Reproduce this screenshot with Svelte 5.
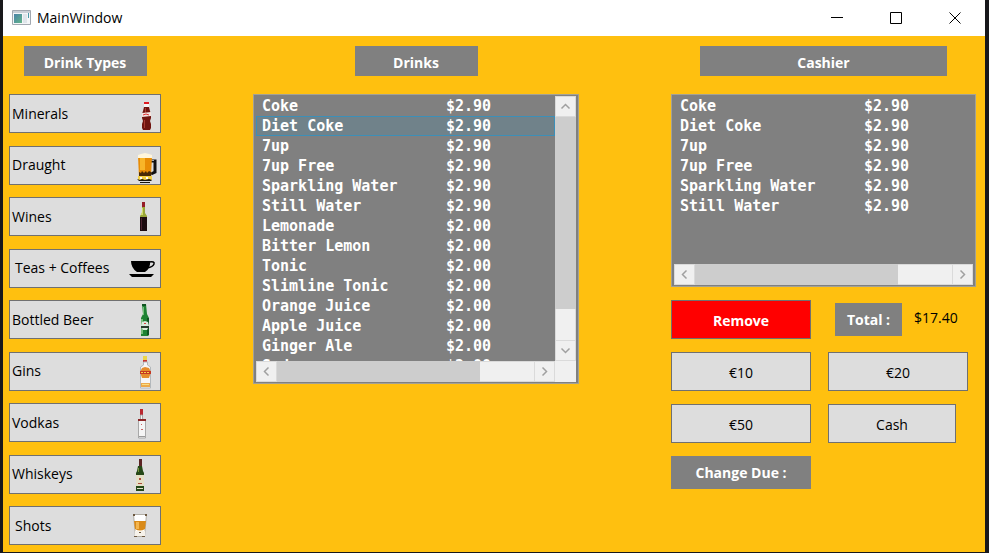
<script>
  const types = [
    { label: 'Minerals', icon: 'coke' },
    { label: 'Draught', icon: 'pint' },
    { label: 'Wines', icon: 'wine' },
    { label: 'Teas + Coffees', icon: 'cup', indent: true },
    { label: 'Bottled Beer', icon: 'beer' },
    { label: 'Gins', icon: 'gin' },
    { label: 'Vodkas', icon: 'vodka' },
    { label: 'Whiskeys', icon: 'whiskey' },
    { label: 'Shots', icon: 'shot', indent: true }
  ];

  const drinks = [
    { name: 'Coke', price: 2.9 },
    { name: 'Diet Coke', price: 2.9 },
    { name: '7up', price: 2.9 },
    { name: '7up Free', price: 2.9 },
    { name: 'Sparkling Water', price: 2.9 },
    { name: 'Still Water', price: 2.9 },
    { name: 'Lemonade', price: 2 },
    { name: 'Bitter Lemon', price: 2 },
    { name: 'Tonic', price: 2 },
    { name: 'Slimline Tonic', price: 2 },
    { name: 'Orange Juice', price: 2 },
    { name: 'Apple Juice', price: 2 },
    { name: 'Ginger Ale', price: 2 },
    { name: 'Soda', price: 2 }
  ];

  let selected = $state(1);
  let picked = $state(-1);
  let order = $state(drinks.slice(0, 6));
  let total = $derived(order.reduce((sum, d) => sum + d.price, 0));

  function addDrink(i) {
    selected = i;
    order.push(drinks[i]);
  }

  function removeDrink() {
    if (picked >= 0) order.splice(picked, 1);
    picked = -1;
  }
</script>

{#snippet arrow(d, label)}
  <button class="arrow" aria-label={label}>
    <svg viewBox="0 0 21 21" width="21" height="21" aria-hidden="true"><path {d} /></svg>
  </button>
{/snippet}

{#snippet hbar()}
  <div class="hbar">
    {@render arrow('M12.500 6.500 L8.500 10.500 L12.500 14.500', 'Scroll left')}
    <div class="track"><div class="thumb"></div></div>
    {@render arrow('M8.500 6.500 L12.500 10.500 L8.500 14.500', 'Scroll right')}
  </div>
{/snippet}

{#snippet row(item, active, pick)}
  <li role="option" aria-selected={active}>
    <button class="row" class:active onclick={pick}>
      <span class="name">{item.name}</span><span>${item.price.toFixed(2)}</span>
    </button>
  </li>
{/snippet}

{#snippet picture(kind)}
  <svg class="picture" viewBox="0 0 34 37" width="34" height="37" aria-hidden="true">
    {#if kind === 'coke'}
      <path fill="#f8f5f4" d="M18 9h5v4l1 4h-7l1-4z" />
      <path fill="#e01b22" d="M18 7h5v2h-5z" />
      <path fill="#70140f" d="M18 12h5l1 4 1 3v4l-1 3 1 3v4l-1 2h-7l-1-2v-4l1-3-1-3v-4l1-3z" />
      <path fill="#a83a30" d="M19 13h1v5h-1zM18 25h1v8h-1z" />
      <path fill="#f4e4e0" d="M16 18l9-1v4l-9 1z" />
      <path fill="none" stroke="#d33" d="M17 20l3-1 3 1" />
    {:else if kind === 'pint'}
      <path fill="none" stroke="#111" stroke-width="3" d="M25 14h4v11l-4 2" />
      <path fill="none" stroke="#aaa" d="M25 13.500h3" />
      <path fill="#e88c05" d="M12 9h14l-1 21H13z" />
      <path fill="#f8b529" d="M14 11h5v12h-5z" />
      <path fill="#fff6dc" d="M12 8l3-1 4-1 4 1 3 1v3H12z" />
      <path fill="#4a2a05" d="M13 25l2 1 1-2 2 2 2-2 1 2 2-2 2 1v4H13z" />
      <path fill="#f3d044" d="M12 29h14v4H12z" />
      <path fill="#18150c" d="M11 32l3 1 2-1 3 1 4-1 3 1-1 1H13zM14 35h10v1H14z" />
      <path fill="#fff" d="M14 30h2v2h-2zM20 30h2v2h-2z" />
    {:else if kind === 'wine'}
      <path fill="#951d28" d="M16 4h3v6h-3z" />
      <path fill="#9aa63a" d="M16 9h3v6l2 3v3h-7v-3l2-3z" />
      <path fill="#d2dc68" d="M16 10h1v7h-2v-1l1-2z" />
      <path fill="#1c0c10" d="M14 19h7v14h-7z" />
      <path fill="#4b2430" d="M15 20h1v12h-1z" />
    {:else if kind === 'cup'}
      <path d="M5 11h19q1 7-5 11h-8Q5 18 5 11zM3 24h25l-3 3H6z" />
      <path fill="none" stroke="#000" stroke-width="1.500" d="M23 12q6-1 5 2t-7 4" />
    {:else if kind === 'beer'}
      <path fill="#1f8234" d="M16 3h4l1 10 2 4v17l-1 1h-7v-18l2-4z" />
      <path fill="#0f5420" d="M16 3h4v2h-4zM21 17h2v17h-2z" />
      <path fill="#76be79" d="M17 6h1v8h-1zM15 18h2v15h-2z" />
      <path fill="#d9eadb" d="M16 21l3-1 3 1 1 4-2 4h-4l-2-4z" />
      <path fill="#263b2a" d="M15 25h8v2h-8z" />
      <path fill="#d6433f" d="M18 22h2v1h-2z" />
    {:else if kind === 'gin'}
      <path fill="#ecd54b" d="M17 3h4v5h-4z" />
      <path fill="#c8322e" d="M17 7h4v2h-4z" />
      <path fill="#f6f6f6" stroke="#b3b8bc" d="M17.500 9v3l-3 2v21h10V14l-3-2V9z" />
      <path fill="#e58c2c" d="M16 15l3-1 4 1 2 4-2 6h-7l-2-6z" />
      <path fill="#c53923" d="M14 18h11v3H14z" />
      <path fill="none" stroke="#f6cd49" d="M15 19.500h2m1 0h2m1 0h2" />
      <path fill="#eda94a" d="M15 30h9v4h-9z" />
      <path fill="#f8df83" d="M16 31h7v1h-7z" />
    {:else if kind === 'vodka'}
      <path fill="#b9272f" d="M14 5h3v6h-3z" />
      <path fill="#f5f5f5" stroke="#a8a8a8" d="M14.500 11v4l-2 1v18h7V16l-3-1v-4z" />
      <path fill="#8d2626" d="M12 15h8v2h-8z" />
      <path fill="#c66" d="M15 20h1v1h-1zM15 25h2v1h-2z" />
      <path fill="#999" d="M13 32h6v1h-6z" />
    {:else if kind === 'whiskey'}
      <path fill="#5c2424" d="M13 3h3v8h-3z" />
      <path fill="#264818" d="M12 10h4l1 5 1 2v18h-8V17l1-2z" />
      <path fill="#73943b" d="M12 12h1v4h-1z" />
      <path fill="#e5dfc6" d="M10 19h8v11h-8zM11 32h6v1h-6z" />
      <path fill="#ac4c3c" d="M13 22h2v2h-2zM12 27h4v1h-4z" />
    {:else}
      <path fill="#fff" stroke="#b3afa6" d="M7.500 7.500h13l-2 22h-9z" />
      <path fill="#d98a18" d="M8 14h12l-1 8q-5 3-10 0z" />
      <path fill="#f3b54e" d="M10 15h3v7h-3z" />
      <path fill="#f6f2ea" d="M9 24h10v5H9z" />
      <path fill="#6c5840" d="M8 29h3v1H8zM16 29h3v1h-3zM13 25h2v1h-2zM7 7h2v2H7zM19 7h2v2h-2z" />
    {/if}
  </svg>
{/snippet}

<div class="window">
  <header>
    <svg width="20" height="16" viewBox="0 0 20 16" aria-hidden="true">
      <defs>
        <linearGradient id="pane" x2="1" y2="1">
          <stop offset="0" stop-color="#4a83a8" /><stop offset="1" stop-color="#63b58a" />
        </linearGradient>
      </defs>
      <path fill="#f4f6f8" stroke="#a2a8b0" d="M.5 .5h18v14H.5z" />
      <path fill="#c9cfd6" d="M1 1h17v2H1z" />
      <path fill="url(#pane)" d="M2 4h8v9H2z" />
      <path fill="#dfe5ea" d="M11 4h4v9h-4z" />
      <path fill="#4a9aa8" d="M16 3h1v5h-1z" />
    </svg>
    <h1>MainWindow</h1>
    <div class="controls">
      <button aria-label="Minimize"><svg width="13" height="13" viewBox="0 0 13 13"><path d="M0 5.500h12" /></svg></button>
      <button aria-label="Maximize"><svg width="13" height="13" viewBox="0 0 13 13"><path d="M.5 .5h11v11H.5z" /></svg></button>
      <button aria-label="Close"><svg width="13" height="13" viewBox="0 0 13 13"><path d="M.5 .5l11 11M11.500 .5l-11 11" /></svg></button>
    </div>
  </header>

  <main>
    <section>
      <h2>Drink Types</h2>
      <div class="types">
        {#each types as type}
          <button class="key type" class:indent={type.indent}>
            <span>{type.label}</span>
            {@render picture(type.icon)}
          </button>
        {/each}
      </div>
    </section>

    <section>
      <h2>Drinks</h2>
      <div class="list menu">
        <ul role="listbox" aria-label="Drinks">
          {#each drinks as drink, i}
            {@render row(drink, i === selected, () => addDrink(i))}
          {/each}
        </ul>
        <div class="vbar">
          {@render arrow('M6.500 12.500 L10.500 8.500 L14.500 12.500', 'Scroll up')}
          <div class="track"><div class="thumb"></div></div>
          {@render arrow('M6.500 8.500 L10.500 12.500 L14.500 8.500', 'Scroll down')}
        </div>
        {@render hbar()}
        <div class="corner"></div>
      </div>
    </section>

    <section>
      <h2 class="wide">Cashier</h2>
      <div class="list order">
        <ul role="listbox" aria-label="Order">
          {#each order as item, i}
            {@render row(item, i === picked, () => (picked = i))}
          {/each}
        </ul>
        {@render hbar()}
      </div>
      <div class="till">
        <button class="key remove" onclick={removeDrink}>Remove</button>
        <div class="total">
          <span class="tag" id="total-label">Total :</span>
          <output aria-labelledby="total-label">${total.toFixed(2)}</output>
        </div>
        <button class="key">€10</button>
        <button class="key">€20</button>
        <button class="key">€50</button>
        <button class="key cash">Cash</button>
        <span class="tag">Change Due :</span>
      </div>
    </section>
  </main>
</div>

<style>
  :global(body) {
    background: #18181b;
  }

  .window {
    box-sizing: border-box;
    display: flex;
    flex-direction: column;
    min-height: calc(100vh - 1px);
    margin: 0 4px 1px 3px;
    background: #ffc00f;
    color: #000;
    font: 14px/20px 'Open Sans', 'Noto Sans', sans-serif;
  }

  button {
    box-sizing: border-box;
    margin: 0;
    padding: 0;
    border: 0;
    background: none;
    color: inherit;
    font: inherit;
  }

  header {
    display: flex;
    align-items: center;
    gap: 5px;
    height: 36px;
    padding-left: 9px;
    background: #fff;
  }

  h1 {
    flex: 1;
    margin: 0;
    font-size: 14px;
    font-weight: 400;
  }

  .controls {
    display: flex;
    align-self: stretch;
  }

  .controls button {
    display: grid;
    place-items: center;
    width: 59px;
  }

  .controls path {
    fill: none;
    stroke: #000;
  }

  main {
    flex: 1;
    display: grid;
    grid-template-columns: 152fr 326fr 305fr;
    gap: 92px;
    padding: 10px 9px 7px 6px;
  }

  section {
    display: flex;
    flex-direction: column;
    min-width: 0;
  }

  h2 {
    align-self: center;
    width: 123px;
    margin: 0 0 18px;
    background: #808080;
    color: #fff;
    font-size: 14px;
    font-weight: 700;
    line-height: 30px;
    padding-top: 2px;
    height: 28px;
    text-align: center;
  }

  h2.wide {
    width: 247px;
  }

  .types {
    flex: 1;
    display: flex;
    flex-direction: column;
    justify-content: space-between;
    max-height: 451px;
  }

  .key {
    height: 39px;
    padding-top: 2px;
    border: 1px solid #707070;
    background: #ddd;
  }

  .type {
    display: flex;
    align-items: center;
    justify-content: space-between;
    padding: 0 0 0 2px;
    white-space: nowrap;
  }

  .type.indent {
    padding-left: 5px;
  }

  .picture {
    flex: none;
  }

  .list {
    display: grid;
    padding: 1px 2px;
    border: 1px solid #a3a195;
    background: #808080;
  }

  .menu {
    grid-template: 265px 21px / 1fr 21px;
  }

  .order {
    grid-template: 168px 21px / 1fr;
  }

  ul {
    margin: 0;
    padding: 0;
    overflow: hidden;
    list-style: none;
  }

  .row {
    display: flex;
    width: 100%;
    height: 20px;
    padding: 0 5px;
    border: 1px solid transparent;
    color: #fff;
    font: 700 15px/18px 'DejaVu Sans Mono', monospace;
    text-align: left;
    white-space: nowrap;
  }

  .row.active {
    border-color: #3c8fb8;
    background: #70828a;
  }

  .name {
    flex: none;
    width: 184px;
  }

  .hbar,
  .vbar {
    display: flex;
    min-width: 0;
    background: #f0f0f0;
  }

  .vbar {
    flex-direction: column;
  }

  .track {
    flex: 1;
    border: 0 solid #dadada;
  }

  .hbar .track {
    border-width: 1px 0;
  }

  .vbar .track {
    border-width: 0 1px;
  }

  .thumb {
    background: #cdcdcd;
  }

  .hbar .thumb {
    width: 79%;
    height: 21px;
    margin-top: -1px;
  }

  .vbar .thumb {
    width: 21px;
    height: 86%;
    margin-left: -1px;
  }

  .arrow {
    display: block;
    width: 21px;
    height: 21px;
    border: 1px solid #dadada;
    background: #f0f0f0;
  }

  .arrow svg {
    display: block;
    margin: -1px;
  }

  .arrow path {
    fill: none;
    stroke: #a0a0a0;
    stroke-width: 1.5;
  }

  .corner {
    background: #f0f0f0;
  }

  .till {
    display: grid;
    grid-template-columns: 140px 140px;
    gap: 13px 17px;
    padding-top: 13px;
  }

  .remove {
    background: #f00;
    color: #fff;
    font-weight: 700;
  }

  .total {
    display: flex;
    align-items: center;
    gap: 12px;
    padding-left: 7px;
  }

  .total output {
    padding-bottom: 4px;
  }

  .tag {
    height: 33px;
    background: #808080;
    color: #fff;
    font-weight: 700;
    line-height: 34px;
    text-align: center;
  }

  .total .tag {
    width: 67px;
  }

  .cash {
    width: 128px;
  }
</style>
